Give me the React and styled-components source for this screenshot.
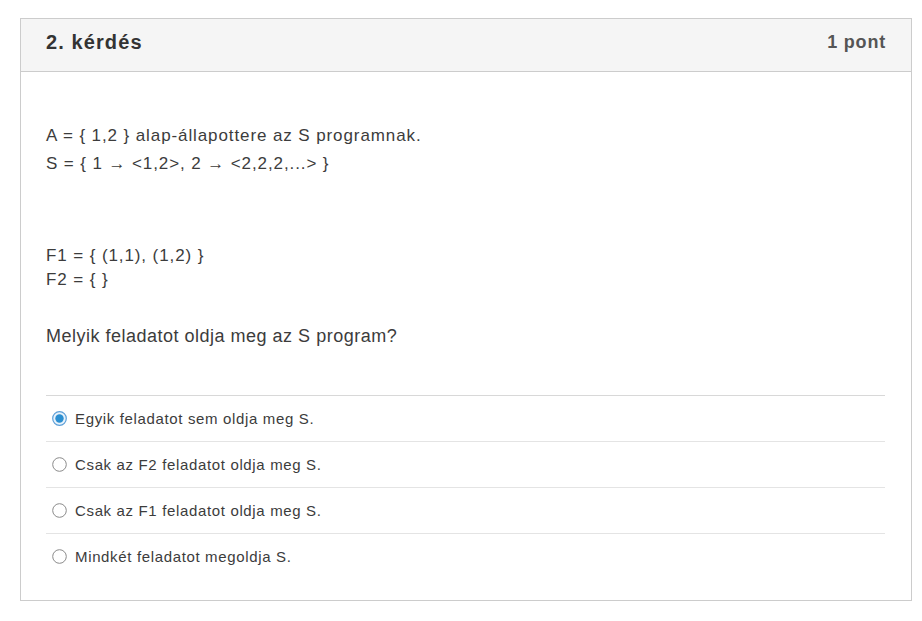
import React from "react";
import styled, { createGlobalStyle } from "styled-components";

const Global = createGlobalStyle`
  html, body { margin: 0; padding: 0; background: #ffffff; }
  body { font-family: "Liberation Sans", Arial, Helvetica, sans-serif; color: #333; }
`;

const Page = styled.div`
  padding: 18px 10px 20px 20px;
`;

const Card = styled.section`
  border: 1px solid #cccccc;
  background: #fff;
  min-height: 583px;
  box-sizing: border-box;
`;

const Header = styled.header`
  display: flex;
  align-items: center;
  justify-content: space-between;
  height: 53px;
  box-sizing: border-box;
  padding: 0 25px 5px;
  background: #f5f5f5;
  border-bottom: 1px solid #cccccc;
`;

const Title = styled.h2`
  margin: 0;
  font-size: 20px;
  font-weight: bold;
  letter-spacing: 1.1px;
  color: #333;
`;

const Points = styled.span`
  font-size: 18px;
  font-weight: bold;
  letter-spacing: 0.8px;
  color: #555;
`;

const Body = styled.div`
  padding: 50px 26px 0 25px;
`;

const Para = styled.p`
  margin: ${(p) => p.$mt || 0}px 0 0;
  font-size: ${(p) => p.$size || 17}px;
  line-height: ${(p) => p.$lh || 24}px;
  letter-spacing: ${(p) => p.$ls ?? 0.9}px;
  color: #3c3c3c;
`;

const Options = styled.ul`
  list-style: none;
  margin: 47px 0 0;
  padding: 0;
`;

const Option = styled.li`
  display: flex;
  align-items: center;
  gap: 8px;
  height: 45px;
  padding-left: 6px;
  border-top: 1px solid ${(p) => (p.$first ? "#d8d8d8" : "#e4e4e4")};
  font-size: 15px;
  letter-spacing: 0.65px;
  color: #3c3c3c;
`;

const Radio = ({ checked }) => (
  <svg width="15" height="15" viewBox="0 0 15 15">
    {checked ? (
      <>
        <circle cx="7.5" cy="7.5" r="6.8" fill="#e8f2fb" stroke="#5c9fd8" strokeWidth="1.2" />
        <circle cx="7.5" cy="7.5" r="4.2" fill="#2b8fd1" />
      </>
    ) : (
      <circle cx="7.5" cy="7.5" r="6.8" fill="#fff" stroke="#8a8a8a" strokeWidth="1" />
    )}
  </svg>
);

const options = [
  { text: "Egyik feladatot sem oldja meg S.", checked: true },
  { text: "Csak az F2 feladatot oldja meg S." },
  { text: "Csak az F1 feladatot oldja meg S." },
  { text: "Mindkét feladatot megoldja S." },
];

export default function App() {
  return (
    <>
      <Global />
      <Page>
        <Card>
          <Header>
            <Title>2. kérdés</Title>
            <Points>1 pont</Points>
          </Header>
          <Body>
            <Para $size={17} $lh={28}>
              A = {"{"} 1,2 {"}"} alap-állapottere az S programnak.
              <br />
              S = {"{"} 1 → &lt;1,2&gt;, 2 → &lt;2,2,2,...&gt; {"}"}
            </Para>
            <Para $size={17} $lh={24} $mt={66}>
              F1 = {"{"} (1,1), (1,2) {"}"}
              <br />
              F2 = {"{"} {"}"}
            </Para>
            <Para $size={18} $lh={24} $ls={0.5} $mt={32}>
              Melyik feladatot oldja meg az S program?
            </Para>
            <Options>
              {options.map((o, i) => (
                <Option key={o.text} $first={i === 0}>
                  <Radio checked={o.checked} />
                  {o.text}
                </Option>
              ))}
            </Options>
          </Body>
        </Card>
      </Page>
    </>
  );
}
